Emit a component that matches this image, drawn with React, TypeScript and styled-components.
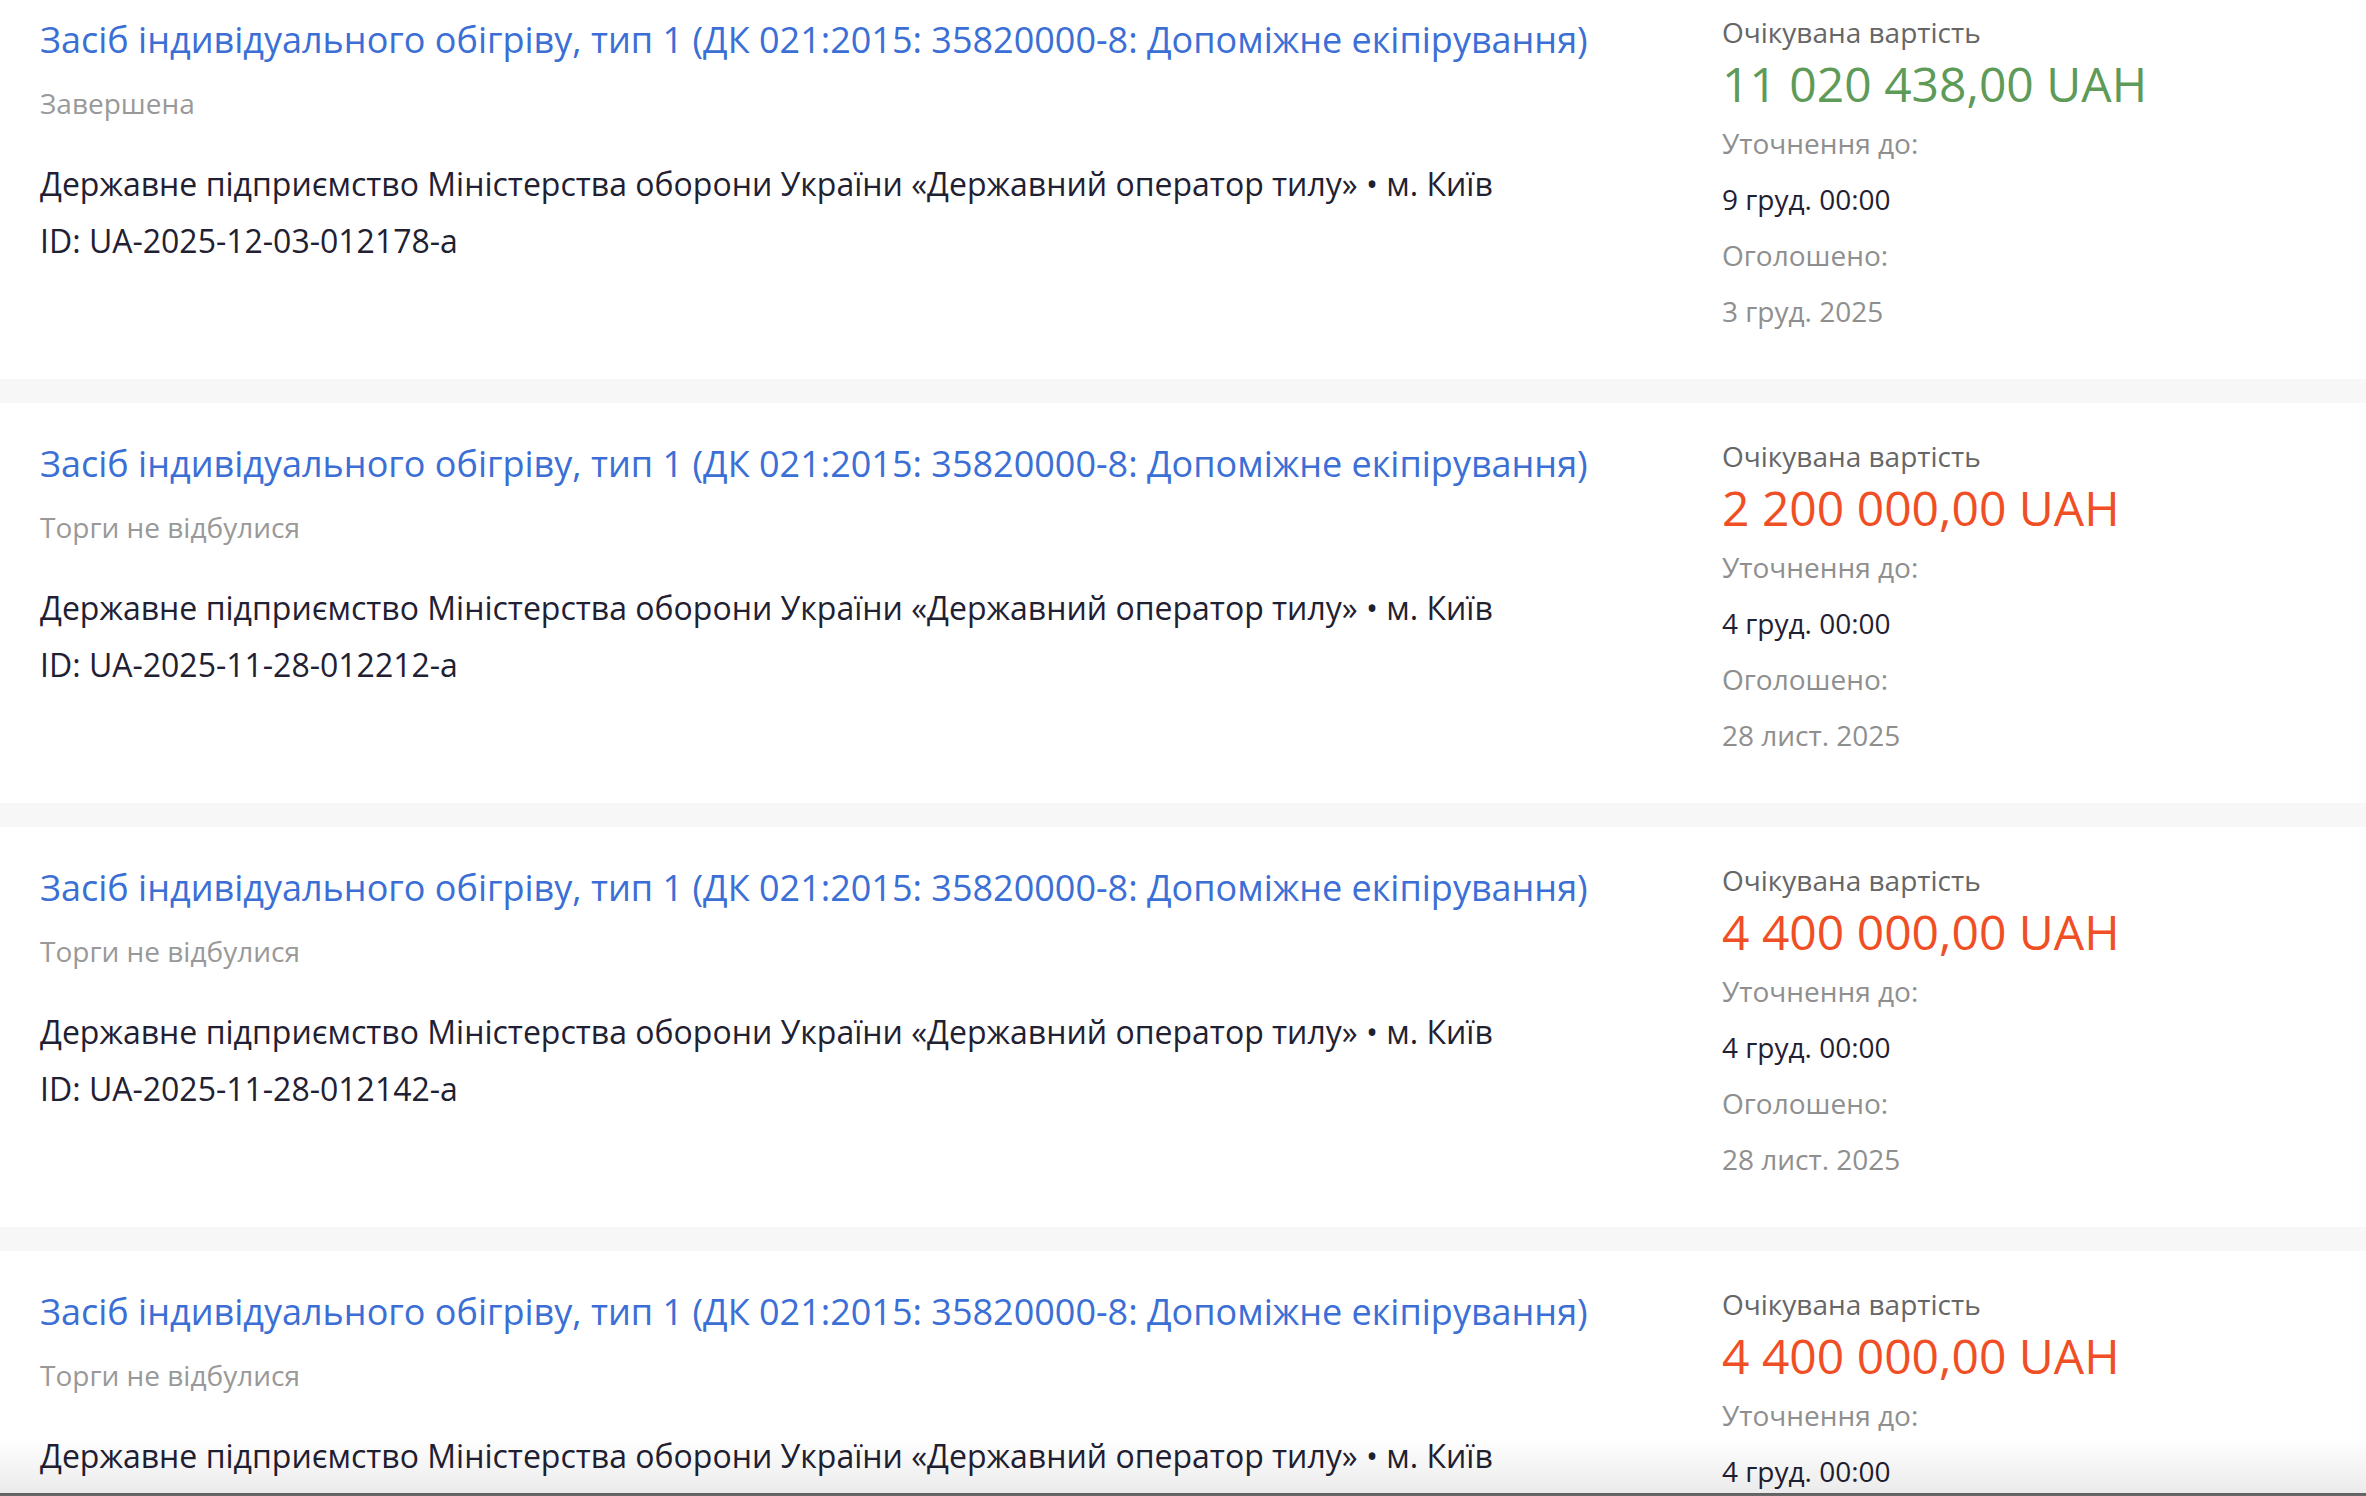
import styled, { createGlobalStyle } from 'styled-components';

const GlobalStyle = createGlobalStyle`
	html,
	body {
		margin: 0;
		padding: 0;
		background: #f7f7f7;
		font-family: 'Open Sans', 'Noto Sans', sans-serif;
		overflow: hidden;
	}
`;

type Tender = {
	status: string;
	id: string;
	amount: string;
	success?: boolean;
	enquiryTill: string;
	published: string;
};

const TITLE = 'Засіб індивідуального обігріву, тип 1 (ДК 021:2015: 35820000-8: Допоміжне екіпірування)';
const BUYER = 'Державне підприємство Міністерства оборони України «Державний оператор тилу» • м. Київ';

const tenders: Tender[] = [
	{
		status: 'Завершена',
		id: 'UA-2025-12-03-012178-a',
		amount: '11 020 438,00 UAH',
		success: true,
		enquiryTill: '9 груд. 00:00',
		published: '3 груд. 2025',
	},
	{
		status: 'Торги не відбулися',
		id: 'UA-2025-11-28-012212-a',
		amount: '2 200 000,00 UAH',
		enquiryTill: '4 груд. 00:00',
		published: '28 лист. 2025',
	},
	{
		status: 'Торги не відбулися',
		id: 'UA-2025-11-28-012142-a',
		amount: '4 400 000,00 UAH',
		enquiryTill: '4 груд. 00:00',
		published: '28 лист. 2025',
	},
	{
		status: 'Торги не відбулися',
		id: 'UA-2025-11-28-012099-a',
		amount: '4 400 000,00 UAH',
		enquiryTill: '4 груд. 00:00',
		published: '28 лист. 2025',
	},
];

const App = () => {
	return (
		<>
			<GlobalStyle />
			<List>
				{tenders.map((t) => (
					<Card key={t.id}>
						<Main>
							<Title href="#">{TITLE}</Title>
							<Status>{t.status}</Status>
							<Buyer $first>{BUYER}</Buyer>
							<Buyer>ID: {t.id}</Buyer>
						</Main>
						<Side>
							<AmountLabel>Очікувана вартість</AmountLabel>
							<Amount $success={t.success}>{t.amount}</Amount>
							<Meta>Уточнення до:</Meta>
							<Meta $dark>{t.enquiryTill}</Meta>
							<Meta>Оголошено:</Meta>
							<Meta>{t.published}</Meta>
						</Side>
					</Card>
				))}
			</List>
			<BottomEdge />
		</>
	);
};

export default App;

const List = styled.div`
	display: flex;
	flex-direction: column;
	gap: 24px;
	margin-top: -21px;
`;

const Card = styled.div`
	display: grid;
	grid-template-columns: 1fr 644px;
	height: 400px;
	box-sizing: border-box;
	padding: 32px 0 0 40px;
	background: #fff;
`;

const Main = styled.div`
	display: flex;
	flex-direction: column;
	align-items: flex-start;
`;

const Title = styled.a`
	margin-top: 1px;
	color: #3b6fd5;
	font-size: 36px;
	line-height: 56px;
	text-decoration: none;
	white-space: nowrap;
`;

const Status = styled.div`
	margin-top: 7px;
	color: #999;
	font-size: 28px;
	line-height: 56px;
`;

const Buyer = styled.div<{ $first?: boolean }>`
	margin-top: ${(p) => (p.$first ? '24px' : '0')};
	color: #1f2133;
	font-size: 32px;
	line-height: 57px;
	white-space: nowrap;
`;

const Side = styled.div`
	display: flex;
	flex-direction: column;
`;

const AmountLabel = styled.div`
	color: #666;
	font-size: 28px;
	line-height: 42px;
`;

const Amount = styled.div<{ $success?: boolean }>`
	color: ${(p) => (p.$success ? '#5e9a58' : '#f04f25')};
	font-size: 48px;
	line-height: 62px;
	white-space: nowrap;
`;

const Meta = styled.div<{ $dark?: boolean }>`
	color: ${(p) => (p.$dark ? '#1f2133' : '#8f8f8f')};
	font-size: 28px;
	line-height: 56px;
`;

const BottomEdge = styled.div`
	position: fixed;
	left: 0;
	right: 0;
	bottom: 0;
	height: 58px;
	pointer-events: none;
	background: linear-gradient(
		180deg,
		rgba(0, 0, 0, 0) 0%,
		rgba(0, 0, 0, 0.08) 94%,
		#5f5f5f 95%,
		#6a6a6a 100%
	);
`;
